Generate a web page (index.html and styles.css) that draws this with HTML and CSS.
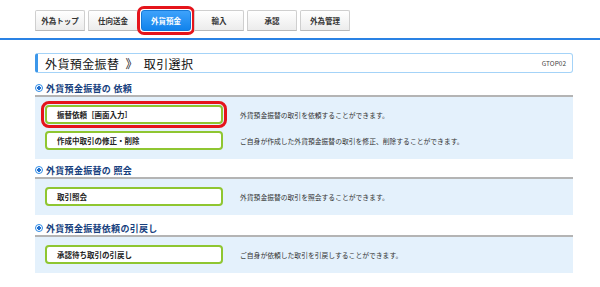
FILE: index.html
```html
<!DOCTYPE html>
<html>

<head>
    <title>外貨預金振替 取引選択</title>
    <meta charset="utf-8">
    <link rel="stylesheet" href="styles.css">
</head>

<body>
    <div class="cabecera">
        <ul class="pestanas">
            <li class="pestana">外為トップ</li>
            <li class="pestana">仕向送金</li>
            <li class="pestana activa">外貨預金</li>
            <li class="pestana">輸入</li>
            <li class="pestana">承認</li>
            <li class="pestana">外為管理</li>
        </ul>
    </div>

    <div class="contenido">
        <div class="titulo">
            <span class="titulo-texto">外貨預金振替<span class="sep">》</span>取引選択</span>
            <span class="codigo">GTOP02</span>
        </div>

        <div class="seccion seccion-1">
            <h4 class="encabezado"><span class="punto"></span>外貨預金振替の 依頼</h4>
            <div class="panel">
                <div class="fila">
                    <div class="boton marcado">振替依頼［画面入力］</div>
                    <span class="desc">外貨預金振替の取引を依頼することができます。</span>
                </div>
                <div class="fila">
                    <div class="boton">作成中取引の修正・削除</div>
                    <span class="desc">ご自身が作成した外貨預金振替の取引を修正、削除することができます。</span>
                </div>
            </div>
        </div>

        <div class="seccion seccion-2">
            <h4 class="encabezado"><span class="punto"></span>外貨預金振替の 照会</h4>
            <div class="panel">
                <div class="fila">
                    <div class="boton">取引照会</div>
                    <span class="desc">外貨預金振替の取引を照会することができます。</span>
                </div>
            </div>
        </div>

        <div class="seccion seccion-3">
            <h4 class="encabezado"><span class="punto"></span>外貨預金振替依頼の引戻し</h4>
            <div class="panel">
                <div class="fila">
                    <div class="boton">承認待ち取引の引戻し</div>
                    <span class="desc">ご自身が依頼した取引を引戻しすることができます。</span>
                </div>
            </div>
        </div>
    </div>
</body>

</html>
```

FILE: styles.css
```css
body {
    margin: 0;
    font-family: "Noto Sans CJK JP", sans-serif;
    color: #222;
    background-color: #fff;
}

.cabecera {
    padding: 10px 0 7px 35px;
    border-bottom: 2px solid #2a82e4;
}

.pestanas {
    display: flex;
    gap: 3px;
    margin: 0;
    padding: 0;
    list-style: none;
}

.pestana {
    width: 48px;
    height: 19px;
    line-height: 19px;
    text-align: center;
    font-size: 7.5px;
    font-weight: bold;
    color: #333;
    background: linear-gradient(#ffffff, #ececec);
    border: 1px solid #cfcfcf;
    border-bottom-color: #b9b9b9;
    border-radius: 2px 2px 0 0;
}

.pestana.activa {
    color: #fff;
    background: linear-gradient(#3ea2fb, #1183ec);
    border-color: #1479d8;
    outline: 3px solid #e5141b;
    outline-offset: 1px;
    border-radius: 3px;
}

.contenido {
    width: 538px;
    margin-left: 35px;
}

.titulo {
    display: flex;
    align-items: center;
    justify-content: space-between;
    margin-top: 13px;
    height: 18px;
    border: 1px solid #a4d3f8;
    border-left: 3px solid #3c97ea;
    border-radius: 3px;
    padding: 0 6px 0 7px;
}

.titulo-texto {
    font-size: 12px;
    letter-spacing: 0.4px;
    color: #111;
}

.sep {
    margin: 0 6px;
}

.codigo {
    font-size: 6.5px;
    color: #444;
}

.seccion-1 {
    margin-top: 9px;
}

.seccion-2 {
    margin-top: 5px;
}

.seccion-3 {
    margin-top: 7px;
}

.encabezado {
    display: flex;
    align-items: center;
    margin: 0;
    height: 12px;
    font-size: 9px;
    letter-spacing: 0.3px;
    color: #173f7e;
    border-bottom: 2px solid #b4b4b4;
    padding-bottom: 1px;
}

.punto {
    display: inline-block;
    box-sizing: border-box;
    width: 8px;
    height: 8px;
    margin-right: 3px;
    border: 1.5px solid #2c8ae6;
    border-radius: 50%;
    background: radial-gradient(circle, #1f6fd0 0 1.6px, #fff 1.8px);
}

.panel {
    display: flex;
    flex-direction: column;
    gap: 7px;
    padding: 8px 0 9px 10px;
    background-color: #e4f1fc;
}

.fila {
    display: flex;
    align-items: center;
}

.boton {
    box-sizing: border-box;
    width: 178px;
    height: 19px;
    line-height: 15px;
    padding-left: 10px;
    font-size: 7.5px;
    font-weight: bold;
    color: #222;
    background-color: #fff;
    border: 2px solid #8fc631;
    border-radius: 4px;
}

.boton.marcado {
    outline: 3px solid #e5141b;
    outline-offset: 1px;
    border-radius: 4px;
}

.desc {
    margin-left: 17px;
    font-size: 6.8px;
    color: #333;
}
```
